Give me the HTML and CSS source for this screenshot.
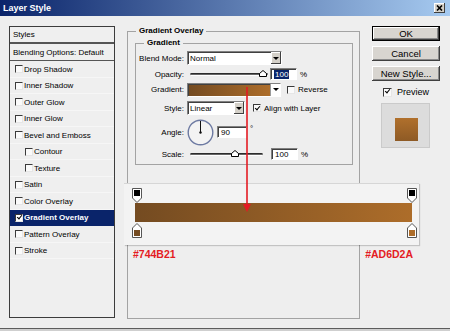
FILE: index.html
```html
<!DOCTYPE html>
<html lang="en">
<head>
    <meta charset="UTF-8">
    <meta name="viewport" content="width=device-width, initial-scale=1.0">
    <title>Layer Style</title>
    <link rel="stylesheet" href="styles.css">
</head>
<body>
<div id="dialog">
    <div id="titlebar">
        <span class="title">Layer Style</span>
        <span class="close">
            <svg width="7" height="6" viewBox="0 0 7 6"><path d="M1 0.5 L6 5.5 M6 0.5 L1 5.5" stroke="#000" stroke-width="1.6"/></svg>
        </span>
    </div>

    <div id="main">
        <!-- 左侧样式列表 -->
        <div id="styles-list">
            <div class="head top">Styles</div>
            <div class="head">Blending Options: Default</div>
            <div class="item"><span class="cb"></span>Drop Shadow</div>
            <div class="item"><span class="cb"></span>Inner Shadow</div>
            <div class="item"><span class="cb"></span>Outer Glow</div>
            <div class="item"><span class="cb"></span>Inner Glow</div>
            <div class="item"><span class="cb"></span>Bevel and Emboss</div>
            <div class="item sub"><span class="cb"></span>Contour</div>
            <div class="item sub"><span class="cb"></span>Texture</div>
            <div class="item"><span class="cb"></span>Satin</div>
            <div class="item"><span class="cb"></span>Color Overlay</div>
            <div class="item selected"><span class="cb on"></span>Gradient Overlay</div>
            <div class="item"><span class="cb"></span>Pattern Overlay</div>
            <div class="item"><span class="cb"></span>Stroke</div>
        </div>

        <!-- 中间设置区 -->
        <fieldset class="group outer">
            <legend>Gradient Overlay</legend>
            <fieldset class="group inner">
                <legend>Gradient</legend>
                <div class="form">
                    <label>Blend Mode:</label>
                    <div class="ctrl">
                        <div class="select wide"><span>Normal</span><i class="drop"></i></div>
                    </div>

                    <label>Opacity:</label>
                    <div class="ctrl">
                        <div class="slider long">
                            <svg class="knob" style="left: 94%" width="8" height="7" viewBox="0 0 8 7"><path d="M0.5 6.5 V3.5 L4 0.5 L7.5 3.5 V6.5 Z" fill="#fff" stroke="#000"/></svg>
                        </div>
                        <div class="field pct"><span class="hl">100</span></div>
                        <span class="unit">%</span>
                    </div>

                    <label>Gradient:</label>
                    <div class="ctrl">
                        <div class="select swatch"><span class="grad"></span><i class="drop plain"></i></div>
                        <span class="cb form-cb"></span>
                        <span class="cb-text">Reverse</span>
                    </div>

                    <label>Style:</label>
                    <div class="ctrl">
                        <div class="select narrow"><span>Linear</span><i class="drop"></i></div>
                        <span class="cb on form-cb align"></span>
                        <span class="cb-text">Align with Layer</span>
                    </div>

                    <label>Angle:</label>
                    <div class="ctrl">
                        <svg class="dial" width="27" height="27" viewBox="0 0 27 27">
                            <circle cx="13.5" cy="13.5" r="12.3" fill="#f3f3f3" stroke="#6d7aa2" stroke-width="1.4"/>
                            <line x1="13.5" y1="13.5" x2="13.5" y2="2" stroke="#111" stroke-width="1"/>
                            <circle cx="13.5" cy="13.5" r="1.2" fill="#111"/>
                        </svg>
                        <div class="field deg">90</div>
                        <span class="unit deg-sign">°</span>
                    </div>

                    <label>Scale:</label>
                    <div class="ctrl">
                        <div class="slider short">
                            <svg class="knob" style="left: 62%" width="8" height="7" viewBox="0 0 8 7"><path d="M0.5 6.5 V3.5 L4 0.5 L7.5 3.5 V6.5 Z" fill="#fff" stroke="#000"/></svg>
                        </div>
                        <div class="field pct scale">100</div>
                        <span class="unit">%</span>
                    </div>
                </div>
            </fieldset>
        </fieldset>

        <!-- 右侧按钮 -->
        <div id="buttons">
            <div class="btn default">OK</div>
            <div class="btn">Cancel</div>
            <div class="btn">New Style...</div>
            <div class="preview-check"><span class="cb on big"></span>Preview</div>
            <div class="preview"><div class="sample"></div></div>
        </div>
    </div>

    <!-- 渐变编辑条 -->
    <div id="editor">
        <div class="panel">
            <div class="stops">
                <svg width="10" height="15" viewBox="0 0 10 15"><path d="M0.5 0.5 H9.5 V10 L5 14.5 L0.5 10 Z" fill="#fff" stroke="#555"/><rect x="2" y="2" width="6" height="6" fill="#000"/></svg>
                <svg width="10" height="15" viewBox="0 0 10 15"><path d="M0.5 0.5 H9.5 V10 L5 14.5 L0.5 10 Z" fill="#fff" stroke="#555"/><rect x="2" y="2" width="6" height="6" fill="#000"/></svg>
            </div>
            <div class="bar"></div>
            <div class="stops low">
                <svg width="10" height="15" viewBox="0 0 10 15"><path d="M5 0.5 L9.5 5 V14.5 H0.5 V5 Z" fill="#fff" stroke="#555"/><rect x="2" y="7" width="6" height="6" fill="#744b21"/></svg>
                <svg width="10" height="15" viewBox="0 0 10 15"><path d="M5 0.5 L9.5 5 V14.5 H0.5 V5 Z" fill="#fff" stroke="#555"/><rect x="2" y="7" width="6" height="6" fill="#ad6d2a"/></svg>
            </div>
        </div>
        <div class="hex">
            <span>#744B21</span>
            <span>#AD6D2A</span>
        </div>
    </div>

    <svg id="arrow" width="10" height="126" viewBox="0 0 10 126">
        <line x1="5" y1="0" x2="5" y2="119" stroke="#e41b23" stroke-width="1.6"/>
        <path d="M1 117 H9 L5 125 Z" fill="#e41b23"/>
    </svg>
</div>
</body>
</html>
```

FILE: styles.css
```css
body {
    margin: 0;
    font-family: "Liberation Sans", Arial, sans-serif;
    font-size: 8px;
    color: #000;
}

#dialog {
    position: relative;
    width: 450px;
    height: 331px;
    background-color: #cfcfcf;
    display: flex;
    flex-direction: column;
    overflow: hidden;
}

/* 标题栏 */
#titlebar {
    height: 16px;
    flex: none;
    display: flex;
    align-items: center;
    justify-content: space-between;
    padding: 0 5px 0 3px;
    background: linear-gradient(to right, #0a246a, #a6caf0);
}
#titlebar .title {
    color: #fff;
    font-weight: bold;
    font-size: 9px;
}
#titlebar .close {
    width: 11px;
    height: 10px;
    background-color: #d4d0c8;
    box-shadow: inset -1px -1px #404040, inset 1px 1px #fff;
    display: flex;
    align-items: center;
    justify-content: center;
}

#main {
    flex: 1;
    display: flex;
    align-items: flex-start;
    padding: 10px 0 0 9px;
    background-color: #eeeeee;
    border-bottom: 1px solid #5c5c5c;
    margin-bottom: 2px;
}

/* 复选框 */
.cb {
    position: relative;
    flex: none;
    width: 8px;
    height: 8px;
    box-sizing: border-box;
    border: 1px solid;
    border-color: #3a3a3a #e6e6e6 #e6e6e6 #3a3a3a;
    background-color: #fafafa;
}
.cb.on::after {
    content: "";
    position: absolute;
    left: 1.5px;
    top: -0.5px;
    width: 2px;
    height: 4px;
    border: solid #000;
    border-width: 0 1.5px 1.5px 0;
    transform: rotate(40deg);
}
.cb.big {
    width: 9px;
    height: 9px;
}
.cb.big::after {
    left: 2px;
}

/* 左侧列表 */
#styles-list {
    width: 106px;
    height: 292px;
    box-sizing: border-box;
    border: 1px solid #3c3c3c;
    background-color: #efefef;
    flex: none;
}
#styles-list .head {
    height: 16px;
    display: flex;
    align-items: center;
    padding-left: 3px;
    border-bottom: 1px solid #555;
}
#styles-list .head.top {
    height: 15px;
    border-bottom: 2px solid #555;
}
#styles-list .item {
    height: 16.5px;
    display: flex;
    align-items: center;
    gap: 1px;
    padding-left: 5px;
    box-shadow: inset 0 -1px 0 #f6f6f6;
}
#styles-list .item.sub {
    padding-left: 15px;
}
#styles-list .item.selected {
    background-color: #0a246a;
    color: #fff;
    font-weight: bold;
    box-shadow: none;
}
#styles-list .item.selected .cb {
    background-color: #fff;
}

/* 分组框 */
fieldset.group {
    margin: 0;
    padding: 0;
    border: 1px solid #a3a3a3;
    min-inline-size: 0;
    box-sizing: border-box;
}
fieldset.group legend {
    padding: 0 3px;
    font-weight: bold;
    line-height: 10px;
}
.outer {
    flex: none;
    margin-left: 12px !important;
    width: 233px;
    height: 293px;
    padding: 2px 6px 0 7px !important;
}
.outer > legend {
    margin-left: 1px;
}
.inner {
    width: 218px;
    padding: 2px 0 1px 0 !important;
}
.inner > legend {
    margin-left: 8px;
}

.form {
    display: grid;
    grid-template-columns: 48px auto;
    grid-template-rows: 16px 16px 15px 22px 26px 18px;
    column-gap: 3px;
    align-items: center;
}
.form label {
    text-align: right;
}
.ctrl {
    display: flex;
    align-items: center;
}

/* 下拉框 */
.select {
    height: 14px;
    display: flex;
    box-sizing: border-box;
    border: 1px solid;
    border-color: #808080 #fff #fff #808080;
    box-shadow: inset 1px 1px 0 #404040;
    background-color: #fff;
}
.select span {
    flex: 1;
    align-self: center;
    padding-left: 2px;
}
.select.wide {
    width: 95px;
}
.select.narrow {
    width: 58px;
}
.select.swatch {
    width: 94px;
}
.select .grad {
    padding: 0;
    align-self: stretch;
    margin: 1px 0 0 1px;
    background: linear-gradient(to right, #744b21, #ad6d2a);
}
.drop {
    width: 10px;
    flex: none;
    background-color: #d4d0c8;
    box-shadow: inset -1px -1px #404040, inset 1px 1px #fff;
    display: flex;
    align-items: center;
    justify-content: center;
}
.drop::after {
    content: "";
    border-top: 3px solid #000;
    border-left: 3px solid transparent;
    border-right: 3px solid transparent;
}
.drop.plain {
    width: 9px;
    background-color: #fff;
    box-shadow: none;
    border-left: 1px solid #9a9a9a;
}

.form-cb {
    margin-left: 6px;
}
.form-cb.align {
    margin-left: 8px;
}
.cb-text {
    margin-left: 3px;
}

/* 滑块 */
.slider {
    position: relative;
    height: 3px;
    box-sizing: border-box;
    margin-left: 3px;
    border-top: 1px solid #2c2c2c;
    border-bottom: 1px solid #fff;
    background-color: #666;
    border-radius: 2px;
}
.slider.long {
    width: 78px;
}
.slider.short {
    width: 73px;
}
.knob {
    position: absolute;
    top: -4px;
    margin-left: -4px;
}

/* 输入框 */
.field {
    height: 12px;
    box-sizing: border-box;
    border: 1px solid;
    border-color: #808080 #fff #fff #808080;
    box-shadow: inset 1px 1px 0 #404040;
    background-color: #fff;
    padding-left: 3px;
    display: flex;
    align-items: center;
}
.field.pct {
    width: 27px;
    margin-left: 2px;
}
.field.pct.scale {
    margin-left: 8px;
}
.field.deg {
    width: 30px;
    margin-left: 3px;
}
.hl {
    background-color: #0a246a;
    color: #fff;
    padding: 0 1px;
    line-height: 9px;
}
.unit {
    margin-left: 3px;
}
.deg-sign {
    align-self: flex-start;
    margin-top: 5px;
}

/* 右侧按钮 */
#buttons {
    flex: none;
    width: 68px;
    margin-left: 12px;
    display: flex;
    flex-direction: column;
    gap: 5px;
}
.btn {
    height: 15px;
    box-sizing: border-box;
    background-color: #d8d5d0;
    display: flex;
    align-items: center;
    justify-content: center;
    font-size: 9.5px;
    box-shadow: inset -1px -1px #404040, inset 1px 1px #fff, inset -2px -2px #8a8a8a;
}
.btn.default {
    border: 1px solid #000;
}
.preview-check {
    height: 12px;
    display: flex;
    align-items: center;
    gap: 5px;
    margin-left: 11px;
    font-size: 9px;
}
.preview {
    width: 49px;
    height: 45px;
    box-sizing: border-box;
    margin-left: 9px;
    padding: 14px 0 0 13px;
    background-color: #dcdcdc;
    border: 1px solid #cacaca;
}
.preview .sample {
    width: 23px;
    height: 23px;
    background: linear-gradient(to top, #8e5a25, #b0702c);
}

/* 渐变编辑条（覆盖在分组框上） */
#editor {
    position: absolute;
    left: 124px;
    top: 183px;
    width: 295px;
}
#editor .panel {
    height: 62px;
    box-sizing: border-box;
    background-color: #f3f3f3;
    border-top: 1px solid #d6d6d6;
    box-shadow: 1px 1px 1px rgba(0, 0, 0, 0.18);
    padding: 4px 2px 0 8px;
}
#editor .stops {
    height: 15px;
    display: flex;
    justify-content: space-between;
}
#editor .stops.low {
    margin-top: 1px;
}
#editor .bar {
    height: 19px;
    margin: 0 5px 0 3px;
    background: linear-gradient(to right, #744b21, #ad6d2a);
}
#editor .hex {
    display: flex;
    justify-content: space-between;
    margin-top: 3px;
    padding: 0 6px 0 9px;
    color: #e41b23;
    font-weight: bold;
    font-size: 10.5px;
    line-height: 12px;
}

#arrow {
    position: absolute;
    left: 242px;
    top: 87px;
}
```
